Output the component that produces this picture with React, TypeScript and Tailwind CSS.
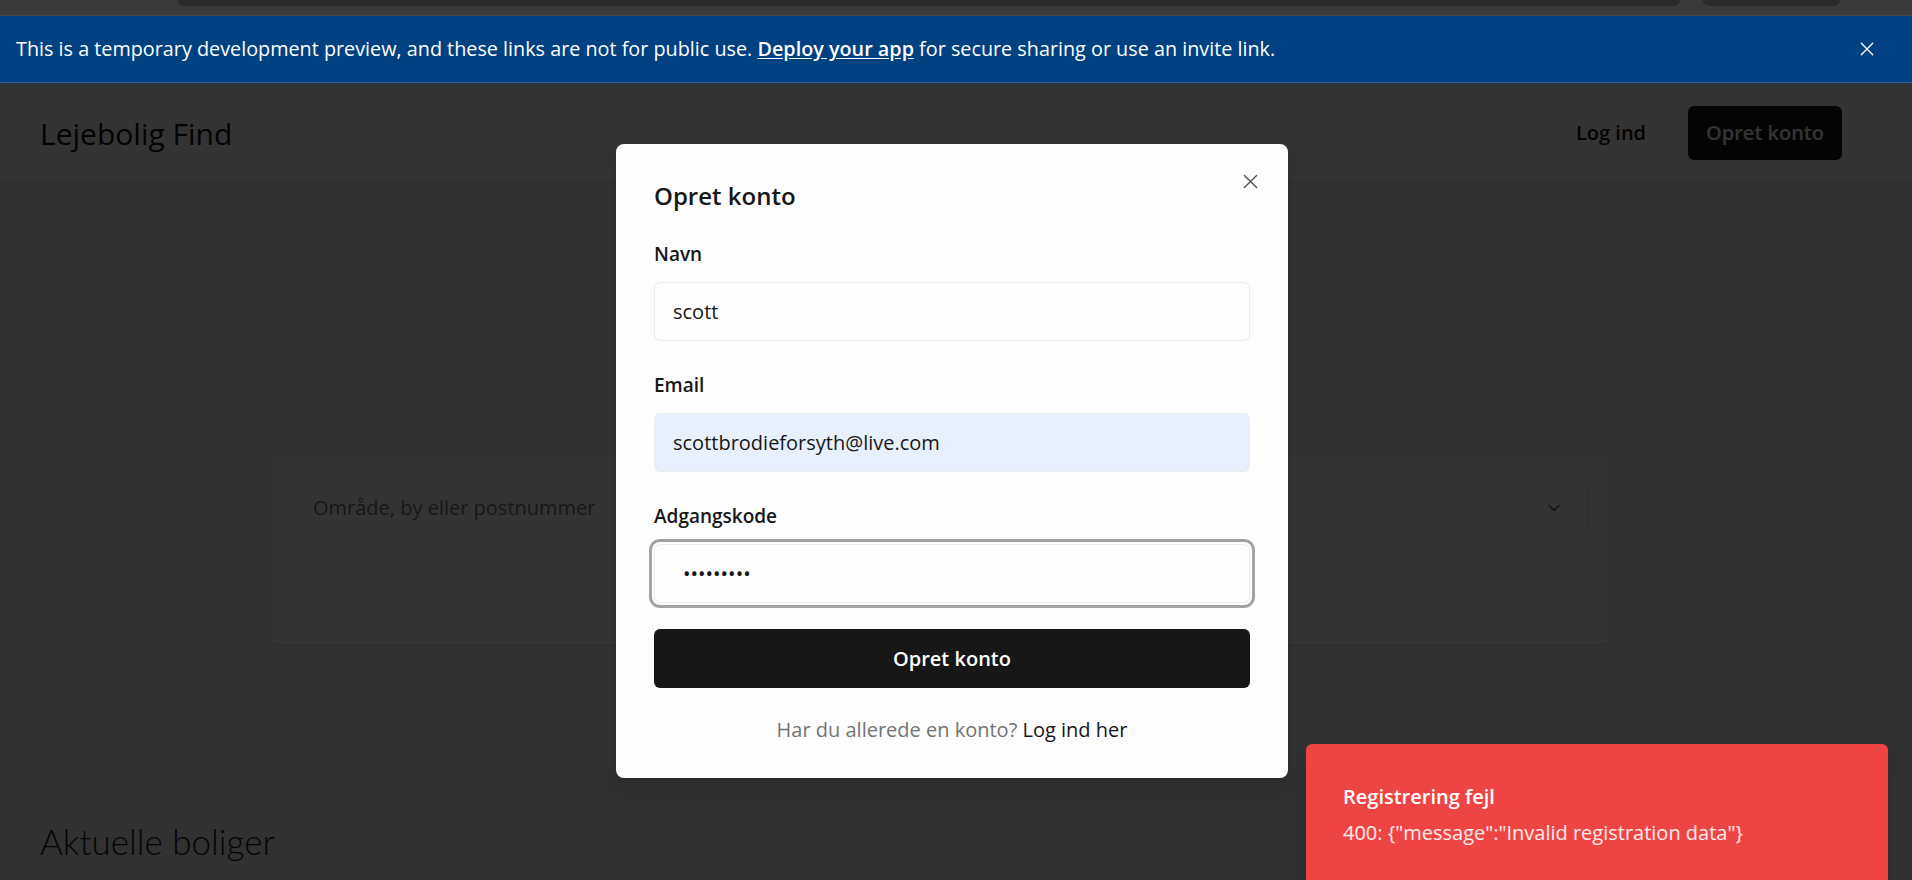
import { ChevronDown } from 'lucide-react';

function CloseGlyph({ size, className }: { size: number; className?: string }) {
  return (
    <svg
      width={size}
      height={size}
      viewBox="0 0 16 16"
      fill="none"
      stroke="currentColor"
      strokeWidth={1.5}
      strokeLinecap="round"
      className={className}
    >
      <path d="M1.5 1.5 14.5 14.5M14.5 1.5 1.5 14.5" />
    </svg>
  );
}

/** The dark strip of the browser window above the preview banner. */
function BrowserStrip() {
  return (
    <div className="flex h-[16px] shrink-0 gap-[23px] border-b border-[#474747] bg-[#3a3a3a] pl-[177px]">
      <div className="h-[6px] w-[1503px] rounded-b-[6px] bg-[#2a2a2a]" />
      <div className="h-[6px] w-[137px] rounded-b-[6px] bg-[#2a2a2a]" />
    </div>
  );
}

function PreviewBanner() {
  return (
    <div className="flex h-[67px] shrink-0 items-center justify-between border-b border-[#2566a8] bg-[#004182] pl-[16px] pr-[38px] text-[19.8px] text-white">
      <p>
        This is a temporary development preview, and these links are not for public use.{' '}
        <a className="font-semibold underline underline-offset-2">Deploy your app</a> for secure
        sharing or use an invite link.
      </p>
      <CloseGlyph size={14} className="text-white" />
    </div>
  );
}

function Page() {
  return (
    <div className="flex flex-col">
      <header className="flex h-[97px] items-center justify-between border-b border-[#eeeeee] bg-white pl-[40px] pr-[70px] pt-[4px]">
        <span className="text-[30px] font-medium text-[#111111]">Lejebolig Find</span>
        <nav className="flex items-center gap-[42px] text-[20px] font-semibold">
          <a className="text-[#111111]">Log ind</a>
          <button className="h-[54px] rounded-[6px] bg-[#171717] px-[18px] text-white">
            Opret konto
          </button>
        </nav>
      </header>

      <section className="flex h-[273px] items-center justify-center">
        <h1 className="text-[36px] font-semibold text-[#171717]">Find din næste bolig</h1>
      </section>

      <div className="pl-[270px] pr-[302px]">
        <div className="rounded-[8px] border border-[#ececec] bg-white pb-[24px] pl-[23px] pr-[20px] pt-[24px] shadow-sm">
          <div className="grid grid-cols-2 gap-4">
            <div className="flex h-[59px] items-center rounded-[6px] border border-[#ececec] px-[18px] text-[20px] text-[#737373]">
              Område, by eller postnummer
            </div>
            <div className="flex h-[59px] items-center justify-between rounded-[6px] border border-[#ececec] px-[18px] text-[20px] text-[#171717]">
              <span>Alle boligtyper</span>
              <ChevronDown size={20} strokeWidth={1.5} className="mr-[6px] text-[#404040]" />
            </div>
          </div>
          <div className="mt-[24px] flex justify-center">
            <button className="h-[59px] w-[220px] rounded-[6px] bg-[#171717] text-[20px] font-semibold text-white">
              Søg
            </button>
          </div>
        </div>
      </div>

      <h2 className="mt-[174px] pl-[40px] font-['Lato','Open_Sans',sans-serif] text-[35px] font-light leading-[44px] text-[#171717]">
        Aktuelle boliger
      </h2>
    </div>
  );
}

function Field({
  label,
  type,
  value,
  className,
}: {
  label: string;
  type: string;
  value: string;
  className?: string;
}) {
  return (
    <div className="flex flex-col gap-[16px]">
      <label className="text-[19px] font-semibold leading-[24px] text-[#171717]">{label}</label>
      <input
        type={type}
        defaultValue={value}
        readOnly
        className={`h-[59px] w-full rounded-[6px] border border-[#ececec] pr-[18px] text-[20px] text-[#171717] outline-none ${className ?? 'bg-[#fdfdfd] pl-[18px]'}`}
      />
    </div>
  );
}

function SignupDialog() {
  return (
    <div className="absolute left-[616px] top-[61px] w-[672px] rounded-[8px] bg-[#fdfdfd] px-[38px] pb-[36px] pt-[36px] shadow-lg">
      <button className="absolute right-[30px] top-[30px] text-[#525252]" aria-label="Luk">
        <CloseGlyph size={15} />
      </button>
      <h2 className="text-[24px] font-semibold leading-[32px] text-[#171717]">Opret konto</h2>

      <form className="mt-[30px] flex flex-col gap-[32px]">
        <Field label="Navn" type="text" value="scott" />
        <Field
          label="Email"
          type="email"
          value="scottbrodieforsyth@live.com"
          className="bg-[#e8f0fe] pl-[18px]"
        />
        <Field
          label="Adgangskode"
          type="password"
          value="123456789"
          className="bg-[#fdfdfd] pl-[28px] ring-[3px] ring-[#a3a3a3] ring-offset-2 ring-offset-[#fdfdfd]"
        />
      </form>

      <button className="mt-[26px] h-[59px] w-full rounded-[6px] bg-[#171717] text-[20px] font-semibold text-white">
        Opret konto
      </button>

      <p className="mt-[30px] text-center text-[20px] leading-[24px] text-[#737373]">
        Har du allerede en konto? <a className="text-[#171717]">Log ind her</a>
      </p>
    </div>
  );
}

function Toast() {
  return (
    <div className="absolute right-[24px] top-[661px] w-[582px] rounded-[6px] bg-[#ef4444] px-[37px] pb-[40px] pt-[41px] text-white shadow-lg">
      <p className="text-[20px] font-semibold leading-[24px]">Registrering fejl</p>
      <p className="mt-[12px] text-[20px] leading-[24px] text-white/90">
        400: {'{"message":"Invalid registration data"}'}
      </p>
    </div>
  );
}

export default function App() {
  return (
    <div className="flex h-[880px] w-full flex-col overflow-hidden bg-[#3a3a3a] font-['Open_Sans','Noto_Sans',sans-serif]">
      <BrowserStrip />
      <PreviewBanner />
      <div className="relative flex-1 overflow-hidden bg-[#f5f5f5]">
        <Page />
        <div className="absolute inset-0 bg-black/80" />
        <SignupDialog />
        <Toast />
      </div>
    </div>
  );
}
